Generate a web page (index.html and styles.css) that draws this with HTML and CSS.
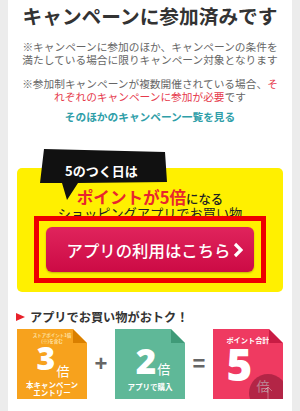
FILE: index.html
```html
<!DOCTYPE html>
<html lang="ja">
<head>
<meta charset="utf-8">
<link rel="stylesheet" href="styles.css">
</head>
<body>
<div class="page">
  <h1 class="title">キャンペーンに参加済みです</h1>
  <p class="note">※キャンペーンに参加のほか、キャンペーンの条件を満たしている場合に限りキャンペーン対象となります</p>
  <p class="note note2">※参加制キャンペーンが複数開催されている場合、<span class="red">それぞれのキャンペーンに参加が必要</span>です</p>
  <p class="link">そのほかのキャンペーン一覧を見る</p>

  <div class="promo">
    <div class="banner">
      <svg class="banner-bg" width="128" height="52" viewBox="0 0 128 52"><polygon points="4,0 125,3 127,33 38,34 27,51 22,34 0,34" fill="#111"/></svg>
      <span class="banner-text">5のつく日は</span>
    </div>
    <p class="promo-l1"><span class="promo-red">ポイントが5倍</span>になる</p>
    <p class="promo-l2">ショッピングアプリでお買い物</p>
    <div class="frame">
      <div class="btn">
        <span>アプリの利用はこちら</span>
        <svg width="10" height="16" viewBox="0 0 10 16"><polyline points="2,2 8,8 2,14" fill="none" stroke="#fff" stroke-width="3.2" stroke-linejoin="miter"/></svg>
      </div>
    </div>
  </div>

  <h2 class="sub"><span class="tri"></span>アプリでお買い物がおトク！</h2>

  <div class="calc">
    <div class="card orange">
      <p class="tiny">ストアポイント1倍<br>(※)を含む</p>
      <div class="num n3"><span class="d">3</span><span class="bai">倍</span></div>
      <p class="cap cap-o">本キャンペーン<br>エントリー</p>
    </div>
    <div class="op">+</div>
    <div class="card green">
      <div class="num n2"><span class="d">2</span><span class="bai">倍</span></div>
      <p class="cap cap-g">アプリで購入</p>
    </div>
    <div class="op">=</div>
    <div class="card pink">
      <p class="cap cap-p">ポイント合計</p>
      <div class="num n5"><span class="d">5</span><span class="bai">倍</span></div>
      <span class="tap"><svg width="16" height="16" viewBox="0 0 16 16"><path d="M8 2 V14 M4 6 L8 2 L12 6" fill="none" stroke="rgba(255,255,255,0.35)" stroke-width="1"/></svg></span>
    </div>
  </div>
</div>
</body>
</html>
```

FILE: styles.css
```css
html, body {
  margin: 0;
  padding: 0;
}
body {
  background: #ececec;
  width: 300px;
  height: 411px;
  overflow: hidden;
  font-family: "Noto Sans CJK JP", "Noto Sans", sans-serif;
}
p, h1, h2 {
  margin: 0;
}
.page {
  width: 284px;
  margin-left: 8px;
  background: #fff;
  padding: 2px 9px 0;
  box-sizing: border-box;
  height: 411px;
}
.title {
  font-size: 19.7px;
  line-height: 28px;
  font-weight: 700;
  color: #333;
  text-align: center;
}
.note {
  font-size: 10.7px;
  line-height: 13px;
  color: #666;
  text-align: center;
  padding: 0 4px;
  margin-top: 10px;
}
.note2 {
  margin-top: 11px;
}
.red {
  color: #e63a4c;
}
.link {
  font-size: 10.7px;
  line-height: 13px;
  font-weight: 700;
  color: #2f9ea8;
  text-align: center;
  margin-top: 7px;
}
.promo {
  position: relative;
  margin-top: 45px;
  background: #fff000;
  border-radius: 5px;
  padding: 21px 0 9px;
}
.banner {
  position: absolute;
  left: 23px;
  top: -19px;
  width: 128px;
  height: 52px;
}
.banner-bg {
  position: absolute;
  left: 0;
  top: 0;
}
.banner-text {
  position: relative;
  display: block;
  padding: 13px 0 0 25px;
  font-size: 13px;
  line-height: 18px;
  font-weight: 700;
  color: #fff;
}
.promo-l1 {
  text-align: center;
  font-size: 12.4px;
  line-height: 16px;
  color: #222;
  font-weight: 500;
}
.promo-red {
  font-size: 16.6px;
  font-weight: 700;
  color: #e8262e;
}
.promo-l2 {
  text-align: center;
  font-size: 13.2px;
  line-height: 14px;
  color: #222;
}
.frame {
  position: relative;
  width: 232px;
  margin: -5px auto 0;
  border: 5px solid #ee0000;
  box-sizing: border-box;
  padding: 6px 7px;
  background: #fff000;
}
.btn {
  height: 45px;
  border-radius: 6px;
  background: linear-gradient(#e0245c, #cc0a45);
  box-shadow: 0 1px 2px rgba(0,0,0,0.25);
  display: flex;
  align-items: center;
  justify-content: center;
  gap: 3px;
  padding-left: 10px;
  color: #fff;
  font-size: 16.4px;
  font-weight: 500;
}
.sub {
  margin-top: 16px;
  font-size: 12.2px;
  line-height: 18px;
  font-weight: 700;
  color: #333;
  display: flex;
  align-items: center;
  gap: 5px;
}
.tri {
  width: 0;
  height: 0;
  border-top: 4.5px solid transparent;
  border-bottom: 4.5px solid transparent;
  border-left: 9px solid #e8202a;
  margin-left: -1px;
}
.calc {
  margin-top: 3px;
  display: flex;
  align-items: center;
}
.op {
  width: 28px;
  text-align: center;
  font-family: "Liberation Sans", sans-serif;
  font-weight: 700;
  font-size: 22px;
  color: #666;
  line-height: 20px;
}
.card {
  position: relative;
  width: 70px;
  height: 70px;
  flex: none;
  color: #fff;
  text-align: center;
  clip-path: polygon(0 0, 56px 0, 70px 14px, 70px 70px, 0 70px);
  box-sizing: border-box;
}
.card::after {
  content: "";
  position: absolute;
  right: 0;
  top: 0;
  width: 14px;
  height: 14px;
  clip-path: polygon(0 0, 100% 100%, 0 100%);
}
.orange { background: #f7a21d; }
.orange::after { background: #d97f00; }
.green { background: #5fb898; }
.green::after { background: #3f9a78; }
.pink { background: #ef3a61; }
.pink::after { background: #c81c44; }
.tiny {
  padding-top: 3px;
  font-size: 4.5px;
  line-height: 6px;
  font-weight: 700;
  color: #fde3a8;
}
.num {
  display: flex;
  justify-content: center;
  align-items: baseline;
}
.d {
  font-family: "Noto Sans", sans-serif;
  font-weight: 900;
}
.bai {
  font-family: "Noto Sans CJK JP", sans-serif;
  font-weight: 400;
  font-size: 13px;
  line-height: 13px;
  margin-left: 1px;
}
.n3 {
  margin-top: 1px;
  padding-left: 2px;
  align-items: flex-end;
}
.n3 .d {
  font-size: 32px;
  line-height: 26px;
}
.n3 .bai {
  margin-bottom: -6px;
}
.n2 {
  margin-top: 17px;
  padding-left: 6px;
}
.n2 .d {
  font-size: 35px;
  line-height: 30px;
}
.n5 {
  margin-top: 2px;
  padding-left: 0;
  align-items: flex-end;
}
.n5 .d {
  font-size: 44px;
  line-height: 36px;
}
.n5 .bai {
  margin-left: 4px;
  margin-bottom: -10px;
}
.cap {
  font-size: 7.5px;
  line-height: 8px;
  font-weight: 700;
}
.cap-o { margin-top: 10px; }
.cap-g { margin-top: 7px; }
.cap-p { margin-top: 7px; font-size: 7.2px; }
.tap {
  position: absolute;
  left: 36px;
  top: 45px;
  width: 38px;
  height: 38px;
  border-radius: 50%;
  background: rgba(130, 20, 50, 0.55);
  display: flex;
  align-items: center;
  justify-content: center;
}
```
